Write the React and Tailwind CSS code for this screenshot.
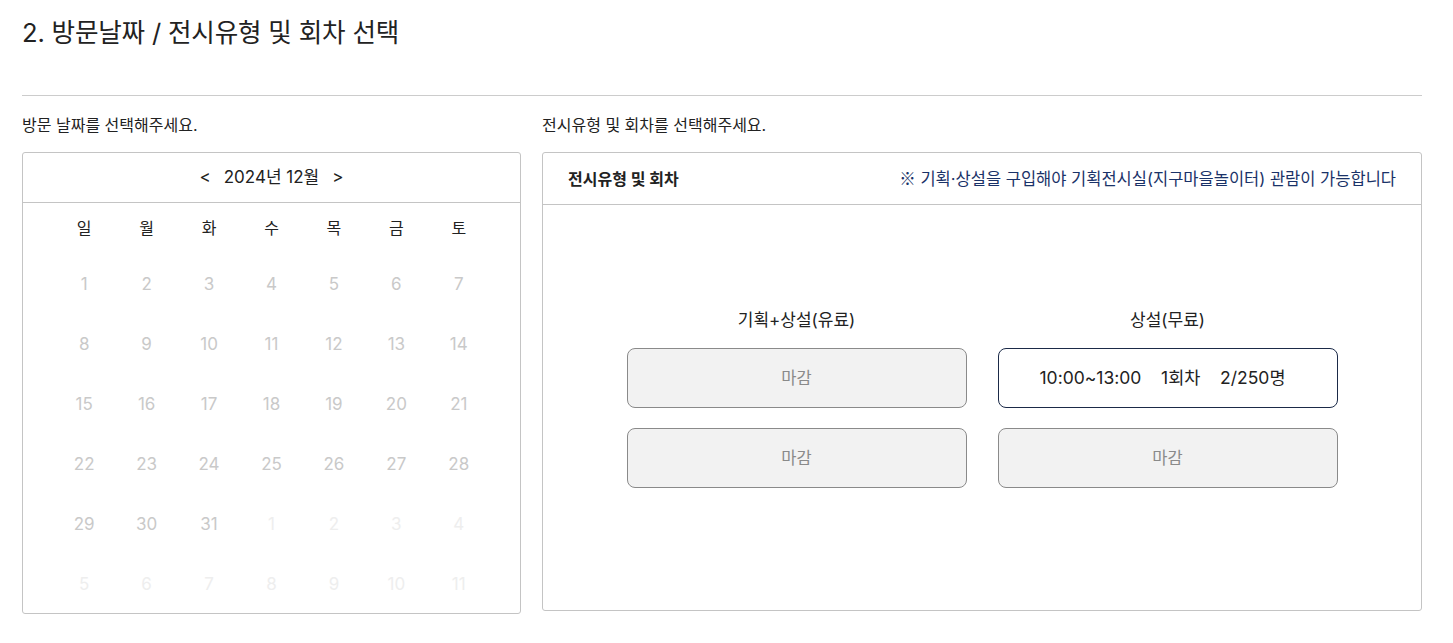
import React from "react";

const font = { fontFamily: '"Inter", "Noto Sans CJK KR", sans-serif' };
const cjk = { fontFamily: '"Noto Sans CJK KR", sans-serif' };

const weekdays = ["일", "월", "화", "수", "목", "금", "토"];
const days = [];
for (let i = 1; i <= 31; i++) days.push({ d: i, cur: true });
for (let i = 1; i <= 11; i++) days.push({ d: i, cur: false });

function Slot({ children, active }) {
  if (active) {
    return (
      <div className="h-[60px] w-[340px] rounded-[8px] border border-[#1b2a48] bg-white flex items-center justify-center pr-[10px] text-[17.5px] text-[#222] whitespace-pre">
        {children}
      </div>
    );
  }
  return (
    <div className="h-[60px] w-[340px] rounded-[8px] border border-[#8a8a8a] bg-[#f2f2f2] flex items-center justify-center text-[16.5px] text-[#8a8a8a]">
      {children}
    </div>
  );
}

export default function App() {
  return (
    <div style={font} className="w-[1453px] h-[643px] bg-white px-[22px] pt-[14px] text-[#222]">
      <h2 className="text-[25.6px] leading-[38px] font-normal text-[#222] tracking-[-0.2px]">
        2. 방문날짜 / 전시유형 및 회차 선택
      </h2>
      <div className="mt-[43px] h-px w-[1400px] bg-[#cccccc]" />
      <div className="mt-[17px] flex gap-[21px]">
        {/* Left */}
        <div className="w-[499px]">
          <div className="text-[16px] leading-[24px] text-[#222]">방문 날짜를 선택해주세요.</div>
          <div className="mt-[15px] h-[462px] overflow-hidden rounded-[3px] border border-[#c4c4c4]">
            <div className="h-[50px] border-b border-[#c4c4c4] flex items-center justify-center text-[17px] text-[#222]">
              <span className="mr-[13px]">&lt;</span>
              <span>2024년 12월</span>
              <span className="ml-[13px]">&gt;</span>
            </div>
            <div className="px-[30px] grid grid-cols-7">
              {weekdays.map((w) => (
                <div key={w} className="h-[52px] pb-[2px] flex items-center justify-center text-[16px] text-[#222]">
                  {w}
                </div>
              ))}
              {days.map((x, i) => (
                <div
                  key={i}
                  className={
                    "h-[60px] flex items-center justify-center text-[17px] " +
                    (x.cur ? "text-[#c9c9c9]" : "text-[#eeeeee]")
                  }
                >
                  {x.d}
                </div>
              ))}
            </div>
          </div>
        </div>
        {/* Right */}
        <div className="w-[880px]">
          <div className="text-[16px] leading-[24px] text-[#222]">전시유형 및 회차를 선택해주세요.</div>
          <div className="mt-[15px] h-[459px] rounded-[3px] border border-[#c4c4c4] flex flex-col">
            <div className="h-[52px] border-b border-[#c4c4c4] flex items-center justify-between pl-[25px] pr-[25px]">
              <span className="text-[16px] font-bold text-[#222]">전시유형 및 회차</span>
              <span className="text-[16.5px] text-[#1a3268]">
                <span style={cjk}>※</span> 기획·상설을 구입해야 기획전시실(지구마을놀이터) 관람이 가능합니다
              </span>
            </div>
            <div className="flex justify-center gap-[31px] pt-[103px]">
              <div className="flex flex-col items-center">
                <div className="text-[17px] leading-[24px] text-[#222]">기획+상설(유료)</div>
                <div className="mt-[16px] flex flex-col gap-[20px]">
                  <Slot>마감</Slot>
                  <Slot>마감</Slot>
                </div>
              </div>
              <div className="flex flex-col items-center">
                <div className="text-[17px] leading-[24px] text-[#222]">상설(무료)</div>
                <div className="mt-[16px] flex flex-col gap-[20px]">
                  <Slot active>{"10:00~13:00    1회차    2/250명"}</Slot>
                  <Slot>마감</Slot>
                </div>
              </div>
            </div>
          </div>
        </div>
      </div>
    </div>
  );
}
